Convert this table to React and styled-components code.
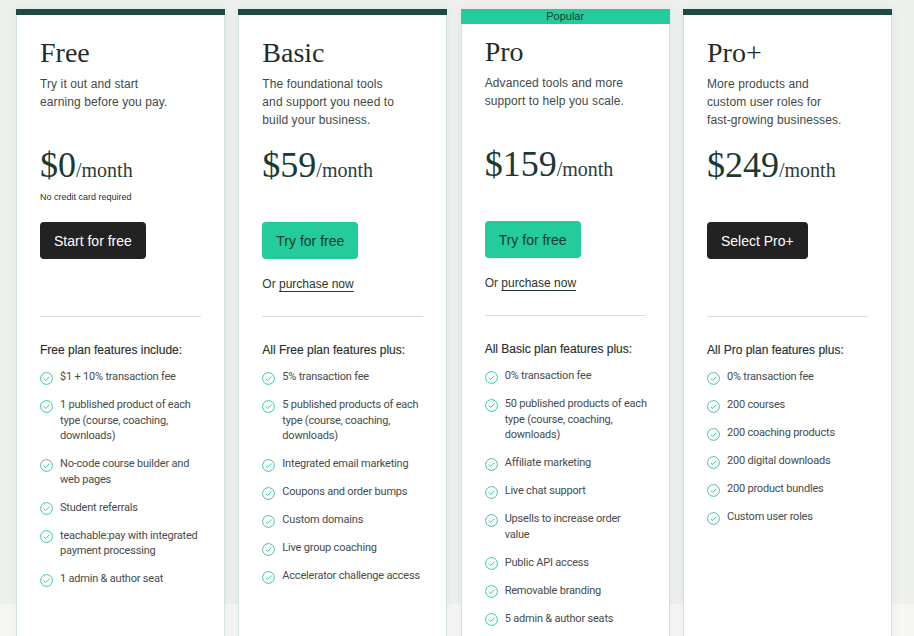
import React from "react";
import styled, { createGlobalStyle } from "styled-components";

const Global = createGlobalStyle`
  html, body { margin: 0; padding: 0; }
  body {
    min-height: 100vh;
    background: linear-gradient(to bottom, #edf0ec 0, #edf0ec 604px, #f6f7f5 604px);
    font-family: "Liberation Sans", Arial, sans-serif;
    color: #2b3431;
  }
`;

const Grid = styled.div`
  display: grid;
  grid-template-columns: repeat(4, 209px);
  column-gap: 13.33px;
  padding: 9px 0 0 16px;
  align-items: stretch;
`;

const Card = styled.div`
  background: #ffffff;
  border: 1px solid #d3e3dd;
  border-top: none;
  box-shadow: 0 0 10px rgba(40, 70, 60, 0.06);
  display: flex;
  flex-direction: column;
`;

const TopBar = styled.div`
  margin: 0 -1px;
  height: ${(p) => (p.$popular ? "15px" : "6px")};
  background: ${(p) => (p.$popular ? "#24cb9b" : "#1d4a40")};
  color: #1c3a33;
  font-size: 11px;
  line-height: 15px;
  text-align: center;
`;

const Body = styled.div`
  padding: ${(p) => (p.$popular ? "11px" : "21px")} 23px 40px 23px;
  display: flex;
  flex-direction: column;
`;

const PlanName = styled.h2`
  margin: 0;
  font-family: "Liberation Serif", "Times New Roman", serif;
  font-weight: 400;
  font-size: 28px;
  line-height: 34px;
  color: #1f2e2a;
`;

const Desc = styled.p`
  margin: 5px 0 0;
  font-size: 12px;
  line-height: 18px;
  min-height: 54px;
  color: #414a47;
  letter-spacing: 0.1px;
`;

const PriceBlock = styled.div`
  margin-top: 16px;
  height: 77px;
`;

const Price = styled.div`
  font-family: "Liberation Serif", "Times New Roman", serif;
  line-height: 40px;
  color: #193a33;
  white-space: nowrap;
`;

const Amount = styled.span`
  font-size: 36px;
`;

const Per = styled.span`
  font-size: 20px;
  color: #2a3e3a;
`;

const Note = styled.div`
  margin-top: -1px;
  font-size: 9px;
  line-height: 12px;
  color: #2a2f2e;
`;

const Cta = styled.div`
  height: 94px;
  display: flex;
  flex-direction: column;
  align-items: flex-start;
`;

const Button = styled.button`
  height: 37px;
  padding: 0 14px;
  border: none;
  border-radius: 4px;
  font-family: "Liberation Sans", Arial, sans-serif;
  font-size: 14px;
  cursor: pointer;
  background: ${(p) => (p.$variant === "teal" ? "#24cb9b" : "#222222")};
  color: ${(p) => (p.$variant === "teal" ? "#183a31" : "#ffffff")};
`;

const OrLine = styled.div`
  margin-top: 16px;
  font-size: 12px;
  line-height: 18px;
  color: #333a38;
`;

const Link = styled.a`
  color: #2a3431;
  text-decoration: underline;
  text-underline-offset: 3px;
  text-decoration-color: #1d3a33;
`;

const Divider = styled.hr`
  margin: 0;
  border: none;
  border-top: 1px solid #d5e2de;
`;

const FeatTitle = styled.div`
  margin-top: 24px;
  font-size: 12px;
  line-height: 18px;
  color: #2a2f2e;
  -webkit-text-stroke: 0.15px #2a2f2e;
`;

const FeatList = styled.ul`
  list-style: none;
  margin: 10px -2px 0 0;
  padding: 0;
  display: flex;
  flex-direction: column;
  gap: 12.5px;
`;

const Feat = styled.li`
  display: flex;
  align-items: flex-start;
  gap: 7px;
  font-family: Roboto, "Liberation Sans", sans-serif;
  font-size: 11px;
  line-height: 15.5px;
  color: #474c4b;
  letter-spacing: -0.2px;
`;

const IconWrap = styled.span`
  flex: 0 0 13px;
  height: 13px;
  margin-top: 2.5px;
  display: inline-flex;
`;

const Check = () => (
  <IconWrap>
    <svg width="13" height="13" viewBox="0 0 13 13" fill="none">
      <circle cx="6.5" cy="6.5" r="5.9" stroke="#3cc79f" strokeWidth="1" />
      <path d="M3.9 6.7 L5.8 8.5 L9.2 4.9" stroke="#3cc79f" strokeWidth="1" strokeLinecap="round" strokeLinejoin="round" />
    </svg>
  </IconWrap>
);

const plans = [
  {
    name: "Free",
    desc: ["Try it out and start", "earning before you pay."],
    price: "$0",
    note: "No credit card required",
    button: "Start for free",
    variant: "dark",
    title: "Free plan features include:",
    features: [
      "$1 + 10% transaction fee",
      "1 published product of each type (course, coaching, downloads)",
      "No-code course builder and web pages",
      "Student referrals",
      "teachable:pay with integrated payment processing",
      "1 admin & author seat",
    ],
  },
  {
    name: "Basic",
    desc: ["The foundational tools", "and support you need to", "build your business."],
    price: "$59",
    button: "Try for free",
    variant: "teal",
    purchase: true,
    title: "All Free plan features plus:",
    features: [
      "5% transaction fee",
      "5 published products of each type (course, coaching, downloads)",
      "Integrated email marketing",
      "Coupons and order bumps",
      "Custom domains",
      "Live group coaching",
      "Accelerator challenge access",
    ],
  },
  {
    name: "Pro",
    popular: true,
    desc: ["Advanced tools and more", "support to help you scale."],
    price: "$159",
    button: "Try for free",
    variant: "teal",
    purchase: true,
    title: "All Basic plan features plus:",
    features: [
      "0% transaction fee",
      "50 published products of each type (course, coaching, downloads)",
      "Affiliate marketing",
      "Live chat support",
      "Upsells to increase order value",
      "Public API access",
      "Removable branding",
      "5 admin & author seats",
    ],
  },
  {
    name: "Pro+",
    desc: ["More products and", "custom user roles for", "fast-growing businesses."],
    price: "$249",
    button: "Select Pro+",
    variant: "dark",
    title: "All Pro plan features plus:",
    features: [
      "0% transaction fee",
      "200 courses",
      "200 coaching products",
      "200 digital downloads",
      "200 product bundles",
      "Custom user roles",
    ],
  },
];

export default function App() {
  return (
    <>
      <Global />
      <Grid>
        {plans.map((p) => (
          <Card key={p.name}>
            <TopBar $popular={p.popular}>{p.popular ? "Popular" : null}</TopBar>
            <Body $popular={p.popular}>
              <PlanName>{p.name}</PlanName>
              <Desc>
                {p.desc.map((l, i) => (
                  <React.Fragment key={i}>
                    {l}
                    {i < p.desc.length - 1 && <br />}
                  </React.Fragment>
                ))}
              </Desc>
              <PriceBlock>
                <Price>
                  <Amount>{p.price}</Amount>
                  <Per>/month</Per>
                </Price>
                {p.note && <Note>{p.note}</Note>}
              </PriceBlock>
              <Cta>
                <Button $variant={p.variant}>{p.button}</Button>
                {p.purchase && (
                  <OrLine>
                    Or <Link href="#">purchase now</Link>
                  </OrLine>
                )}
              </Cta>
              <Divider />
              <FeatTitle>{p.title}</FeatTitle>
              <FeatList>
                {p.features.map((f) => (
                  <Feat key={f}>
                    <Check />
                    <span>{f}</span>
                  </Feat>
                ))}
              </FeatList>
            </Body>
          </Card>
        ))}
      </Grid>
    </>
  );
}
